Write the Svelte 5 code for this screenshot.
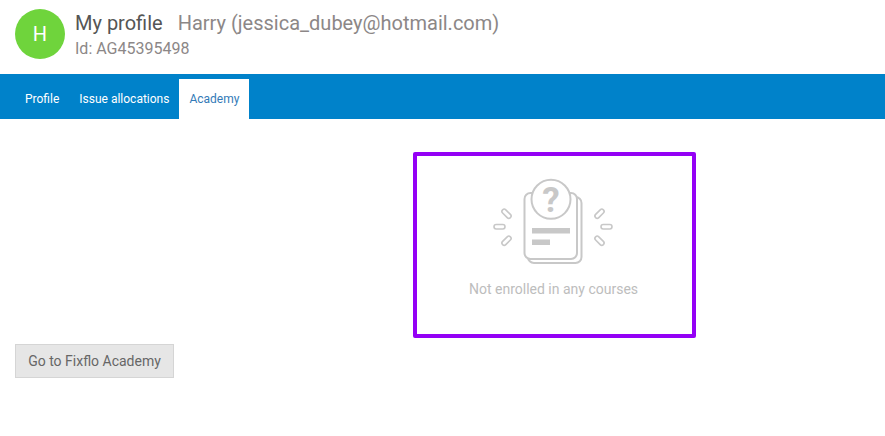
<script>
  const tabs = [
    { label: 'Profile', active: false },
    { label: 'Issue allocations', active: false },
    { label: 'Academy', active: true }
  ];
</script>

<div class="page">
  <header class="profile-head">
    <div class="avatar">H</div>
    <div class="titles">
      <h1><span class="name">My profile</span><span class="user">Harry (jessica_dubey@hotmail.com)</span></h1>
      <div class="id">Id: AG45395498</div>
    </div>
  </header>

  <nav class="tabs">
    {#each tabs as tab}
      <a href="#top" class="tab" class:active={tab.active}>{tab.label}</a>
    {/each}
  </nav>

  <main class="content">
    <section class="empty">
      <svg class="empty-icon" width="125" height="95" viewBox="0 0 125 95" aria-hidden="true">
        <g fill="#fff" stroke="#c8c8c8" stroke-width="2">
          <rect x="38" y="22" width="53.5" height="66" rx="6" />
          <rect x="34.5" y="18" width="52.5" height="66" rx="6" />
          <circle cx="61" cy="24.3" r="19.5" />
        </g>
        <text x="61" y="37" class="mark">?</text>
        <g fill="#c8c8c8">
          <rect x="42" y="53" width="38" height="5.5" />
          <rect x="42" y="64.5" width="18" height="5.5" />
        </g>
        <g fill="none" stroke="#c8c8c8" stroke-width="1.6">
          <rect x="4" y="49.5" width="11" height="4.5" rx="2.25" />
          <rect x="111" y="49.5" width="11" height="4.5" rx="2.25" />
          <rect x="11" y="36.45" width="11" height="4.5" rx="2.25" transform="rotate(45 16.5 38.7)" />
          <rect x="11" y="63.45" width="11" height="4.5" rx="2.25" transform="rotate(-45 16.5 65.7)" />
          <rect x="104" y="36.45" width="11" height="4.5" rx="2.25" transform="rotate(-45 109.5 38.7)" />
          <rect x="104" y="63.45" width="11" height="4.5" rx="2.25" transform="rotate(45 109.5 65.7)" />
        </g>
      </svg>
      <p>Not enrolled in any courses</p>
    </section>

    <button class="academy-btn" type="button">Go to Fixflo Academy</button>
  </main>
</div>

<style>
  :global(body) {
    margin: 0;
    background: #fff;
    font-family: Roboto, "Liberation Sans", sans-serif;
  }

  .page {
    min-height: 436px;
  }

  .profile-head {
    display: flex;
    align-items: center;
    gap: 10px;
    height: 74px;
    padding: 0 15px 6px;
    box-sizing: border-box;
  }

  .avatar {
    display: grid;
    place-items: center;
    width: 50px;
    height: 50px;
    border-radius: 50%;
    background: #6fd43c;
    color: #fff;
    font-size: 20px;
  }

  .titles {
    padding-top: 3px;
  }

  h1 {
    margin: 0;
    font-size: 20px;
    font-weight: 400;
    line-height: 26px;
    color: #8c8787;
  }

  .name {
    margin-right: 15px;
    color: #555;
  }

  .id {
    padding-top: 1px;
    font-size: 16px;
    line-height: 24px;
    color: #8c8787;
  }

  .tabs {
    display: flex;
    align-items: flex-end;
    height: 45px;
    padding-left: 15px;
    background: #0082ca;
  }

  .tab {
    display: flex;
    align-items: center;
    height: 40px;
    padding: 0 10px;
    font-size: 12px;
    color: #fff;
    text-decoration: none;
  }

  .tab.active {
    background: #fff;
    color: #337ab7;
  }

  .content {
    padding: 33px 15px 0;
  }

  .empty {
    display: flex;
    flex-direction: column;
    align-items: center;
    box-sizing: border-box;
    width: 283px;
    height: 186px;
    margin-left: 398px;
    padding: 19px 2px 0 0;
    border: 4px solid #9400f5;
    border-radius: 2px;
  }

  .empty-icon {
    margin-right: 2px;
  }

  .empty p {
    margin: 9px 0 0;
    font-size: 14px;
    line-height: 20px;
    color: #bdbdbd;
  }

  .mark {
    font-family: Roboto, sans-serif;
    font-size: 35px;
    font-weight: 700;
    text-anchor: middle;
    fill: #c8c8c8;
  }

  .academy-btn {
    display: block;
    width: 159px;
    height: 34px;
    margin-top: 6px;
    padding: 0;
    border: 1px solid #d5d5d5;
    background: #e6e6e6;
    font: 14px Roboto, sans-serif;
    color: #666;
  }
</style>
